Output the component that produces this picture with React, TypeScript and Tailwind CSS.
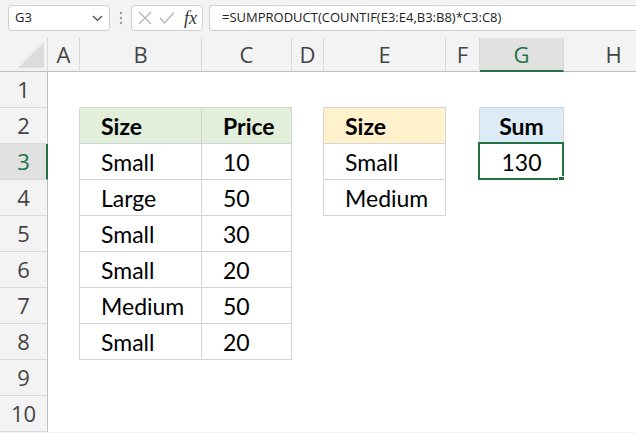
import React from 'react';

const cols = [
  { k: 'A', w: 'w-[32px]' },
  { k: 'B', w: 'w-[122px]' },
  { k: 'C', w: 'w-[90px]' },
  { k: 'D', w: 'w-[32px]' },
  { k: 'E', w: 'w-[122px]' },
  { k: 'F', w: 'w-[34px]' },
  { k: 'G', w: 'w-[84px]' },
  { k: 'H', w: 'w-[100px]' },
];

type Cell = { t: string; bold?: boolean; bg?: string; center?: boolean };

const data: Record<string, Cell> = {
  B2: { t: 'Size', bold: true, bg: 'bg-[#e2efda]' },
  C2: { t: 'Price', bold: true, bg: 'bg-[#e2efda]' },
  E2: { t: 'Size', bold: true, bg: 'bg-[#fff2cc]' },
  G2: { t: 'Sum', bold: true, bg: 'bg-[#ddebf7]', center: true },
  B3: { t: 'Small' },
  C3: { t: '10' },
  E3: { t: 'Small' },
  G3: { t: '130', center: true },
  B4: { t: 'Large' },
  C4: { t: '50' },
  E4: { t: 'Medium' },
  B5: { t: 'Small' },
  C5: { t: '30' },
  B6: { t: 'Small' },
  C6: { t: '20' },
  B7: { t: 'Medium' },
  C7: { t: '50' },
  B8: { t: 'Small' },
  C8: { t: '20' },
};

const letters = 'ABCDEFGH';

function inTable(c: string, r: number): boolean {
  if ((c === 'B' || c === 'C') && r >= 2 && r <= 8) return true;
  if (c === 'E' && r >= 2 && r <= 4) return true;
  if (c === 'G' && r >= 2 && r <= 3) return true;
  return false;
}

function nextCol(c: string): string {
  const i = letters.indexOf(c);
  return letters[i + 1] || '';
}

const cellFont = { fontFamily: 'Lato, "Liberation Sans", sans-serif' };

export default function App() {
  const rows = [1, 2, 3, 4, 5, 6, 7, 8, 9, 10];
  return (
    <div
      className="w-[636px] h-[433px] overflow-hidden bg-[#f3f3f3] flex flex-col"
      style={{ fontFamily: '"Open Sans", "Noto Sans", sans-serif' }}
    >
      {/* Formula bar */}
      <div className="h-[38px] shrink-0 flex items-start pt-[5px] pl-[8px]">
        <div className="w-[102px] h-[26px] bg-white border border-[#cfcfcf] rounded-[4px] flex items-center justify-between pl-[6px] pr-[6px]">
          <span className="text-[13px] text-[#222]">G3</span>
          <svg width="11" height="7" viewBox="0 0 11 7">
            <polyline points="1,1 5.5,5.5 10,1" fill="none" stroke="#444" strokeWidth="1.2" />
          </svg>
        </div>
        <div className="w-[21px] h-[26px] flex items-center justify-center">
          <svg width="4" height="14" viewBox="0 0 4 14">
            <circle cx="2" cy="2" r="1.2" fill="#9a9a9a" />
            <circle cx="2" cy="7" r="1.2" fill="#9a9a9a" />
            <circle cx="2" cy="12" r="1.2" fill="#9a9a9a" />
          </svg>
        </div>
        <div className="w-[72px] h-[26px] bg-white border border-[#cfcfcf] rounded-[4px] flex items-center pl-[5px]">
          <svg width="14" height="14" viewBox="0 0 14 14" className="ml-[1px]">
            <line x1="1" y1="1" x2="13" y2="13" stroke="#b5b5b5" strokeWidth="1.2" />
            <line x1="13" y1="1" x2="1" y2="13" stroke="#b5b5b5" strokeWidth="1.2" />
          </svg>
          <svg width="16" height="14" viewBox="0 0 16 14" className="ml-[7px]">
            <polyline points="1,7 5.5,12 15,1.5" fill="none" stroke="#b5b5b5" strokeWidth="1.2" />
          </svg>
          <span
            className="ml-[9px] text-[18px] italic text-[#333] leading-none"
            style={{ fontFamily: '"Liberation Serif", "DejaVu Serif", serif' }}
          >
            fx
          </span>
        </div>
        <div className="flex-1 ml-[6px] h-[26px] bg-white border border-r-0 border-[#cfcfcf] rounded-l-[4px] flex items-center pl-[12px]">
          <span className="text-[13px] text-[#222] whitespace-nowrap">
            =SUMPRODUCT(COUNTIF(E3:E4,B3:B8)*C3:C8)
          </span>
        </div>
      </div>

      {/* Column headers */}
      <div className="h-[34px] shrink-0 flex">
        <div className="w-[48px] shrink-0 h-full border-r border-b border-r-[#d9d9d9] border-b-[#bdbdbd] flex items-end justify-end pr-[3px] pb-[3px]">
          <svg width="26" height="26" viewBox="0 0 26 26">
            <polygon points="0,26 26,0 26,26" fill="#dcdcdc" />
          </svg>
        </div>
        {cols.map((c) =>
          c.k === 'G' ? (
            <div
              key={c.k}
              className={`${c.w} shrink-0 h-full bg-[#e1e1e1] border-r border-r-[#d9d9d9] border-b-2 border-b-[#217346] flex items-center justify-center text-[22px] text-[#217346] pt-[1px]`}
            >
              {c.k}
            </div>
          ) : (
            <div
              key={c.k}
              className={`${c.w} shrink-0 h-full border-r border-b border-r-[#d9d9d9] border-b-[#bdbdbd] flex items-center justify-center text-[22px] text-[#444]`}
            >
              {c.k}
            </div>
          )
        )}
      </div>

      {/* Body rows */}
      {rows.map((r) => (
        <div key={r} className="h-[36px] shrink-0 flex">
          <div
            className={
              r === 3
                ? 'w-[48px] shrink-0 h-full bg-[#e1e1e1] border-b border-b-[#d9d9d9] border-r-2 border-r-[#217346] flex items-center justify-center text-[22px] text-[#217346] pl-[1px]'
                : 'w-[48px] shrink-0 h-full border-b border-b-[#d9d9d9] border-r border-r-[#bdbdbd] flex items-center justify-center text-[22px] text-[#444]'
            }
          >
            {r}
          </div>
          {cols.map((c) => {
            const key = `${c.k}${r}`;
            const cell = data[key];
            const b = inTable(c.k, r) || inTable(c.k, r + 1);
            const rt = inTable(c.k, r) || inTable(nextCol(c.k), r);
            const cls = [
              c.w,
              'shrink-0 h-full border-[#d4d4d4] relative',
              b ? 'border-b' : '',
              rt ? 'border-r' : '',
              cell && cell.bg ? cell.bg : 'bg-white',
            ].join(' ');
            return (
              <div key={key} className={cls}>
                {cell && (
                  <div
                    className={`pt-[1px] leading-[35px] text-[23px] text-black whitespace-nowrap ${cell.bold ? 'font-bold' : ''} ${cell.center ? 'text-center' : 'pl-[21px]'}`}
                    style={cellFont}
                  >
                    {cell.t}
                  </div>
                )}
                {key === 'G3' && (
                  <div className="absolute left-[-2px] top-[-2px] w-[86px] h-[38px] border-2 border-[#217346]">
                    <div className="absolute left-[78px] top-[32px] w-[8px] h-[8px] bg-[#217346] border border-white" />
                  </div>
                )}
              </div>
            );
          })}
        </div>
      ))}
    </div>
  );
}
